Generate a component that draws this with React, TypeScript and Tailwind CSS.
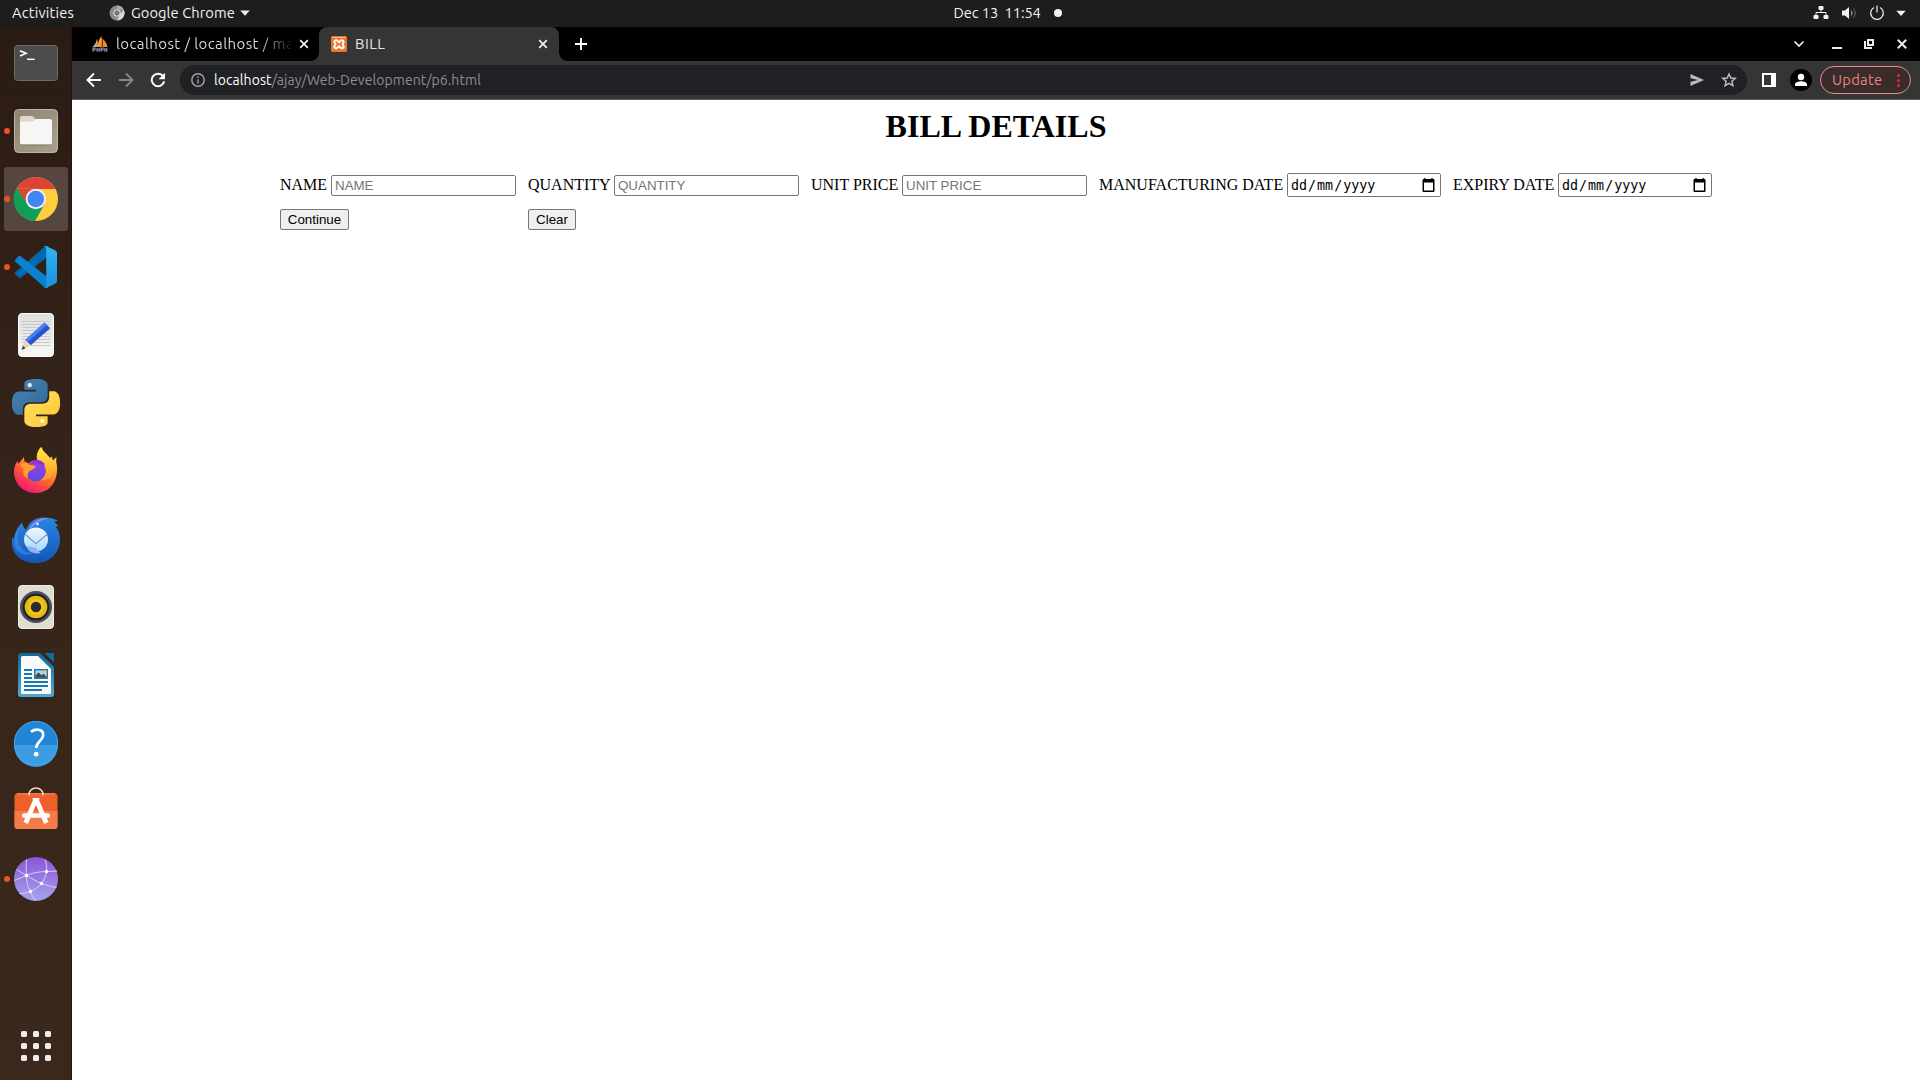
import React from "react";

const ui = "font-['Ubuntu','Noto_Sans',sans-serif]";

function Svg({ children, size = 48, box = 48, className = "" }: { children: React.ReactNode; size?: number; box?: number; className?: string }) {
  return (
    <svg width={size} height={size} viewBox={`0 0 ${box} ${box}`} fill="none" className={`block shrink-0 ${className}`}>
      {children}
    </svg>
  );
}

function Grad({ id, from, to, diag = false }: { id: string; from: string; to: string; diag?: boolean }) {
  return (
    <linearGradient id={id} x1="0" y1="0" x2={diag ? "1" : "0"} y2="1">
      <stop offset="0" stopColor={from} />
      <stop offset="1" stopColor={to} />
    </linearGradient>
  );
}

const Terminal = () => (
  <Svg>
    <rect x="2.5" y="6.5" width="43" height="35" rx="3" fill="#4c4c4c" stroke="#6b6b6b" />
    <path d="M8 11.8l6 2.5-6 2.6" stroke="#fff" strokeWidth="1.6" />
    <path d="M15 20.3h7.5" stroke="#fff" strokeWidth="1.5" />
  </Svg>
);

const Files = () => (
  <Svg>
    <Grad id="files" from="#8c846f" to="#a9a08d" diag />
    <rect x="2.5" y="2.5" width="43" height="43" rx="4" fill="url(#files)" stroke="#bdb6a6" />
    <path d="M8 11a2 2 0 0 1 2-2h10c1.500 0 2.500 3 4 3h8v6H8z" fill="#dcd7ca" />
    <path d="M8 14.500h12c2 0 3-2.500 5-2.500h13a2 2 0 0 1 2 2v21.500a2 2 0 0 1-2 2H10a2 2 0 0 1-2-2z" fill="#f8f7f5" />
    <path d="M9.500 38h29" stroke="#6e6756" strokeOpacity=".6" />
  </Svg>
);

const Chrome = () => (
  <Svg>
    <circle cx="24" cy="24" r="22" fill="#ffcd40" />
    <path d="M5 13A22 22 0 0 1 43.600 14H24z" fill="#db4437" />
    <path d="M5 13A22 22 0 0 0 23 46L32.700 29 24 24 15 29z" fill="#0f9d58" />
    <path d="M5 13l10 16 9-15z" fill="#db4437" />
    <path d="M5 13A22 22 0 0 0 4 34L15 29.200z" fill="#0f9d58" />
    <circle cx="23.800" cy="24" r="10.200" fill="#f1f1f1" />
    <circle cx="23.800" cy="24" r="8.300" fill="#4285f4" />
  </Svg>
);

const VSCode = () => (
  <Svg>
    <Grad id="vs" from="#30b4f4" to="#1b8fe0" />
    <path d="M3 31l3.600 3.700c.6.500 1.400.500 2 .1L36 13.500V3.100c-1.200-.4-2.600-.2-3.500.7L3.400 29.200c-.6.500-.8 1.300-.4 1.800z" fill="#0068ae" />
    <path d="M3 17l3.600-3.700c.6-.5 1.400-.5 2-.1L36 34.500v10.400c-1.200.4-2.600.2-3.500-.7L3.400 18.800c-.6-.5-.8-1.300-.4-1.800z" fill="#0a82cf" />
    <path d="M34 3l9 4.200c1.200.6 2 1.700 2 3v27.600c0 1.300-.8 2.400-2 3L34 45c-1 .3-2-.1-2.500-.8 1.400.6 2.700-.2 2.700-1.600V5.400c0-1.400-1.400-2.200-2.700-1.600C32 3.100 33 2.700 34 3z" fill="url(#vs)" />
  </Svg>
);

const Editor = () => (
  <Svg>
    <Grad id="ed" from="#dedede" to="#f7f7f7" />
    <rect x="6.500" y="2.500" width="35" height="43" rx="3.500" fill="url(#ed)" stroke="#f8f8f8" />
    <path d="M10 10.500h28M10 13.500h28M10 16.500h28M10 19.500h28M10 22.500h28M10 25.500h28M10 28.500h28M10 31.500h28M10 34.500h28" stroke="#c8c8c8" />
    <path d="M32.500 11.500l5.700 5.700-19.400 17-5.700-5z" fill="#2457cf" />
    <path d="M32.500 11.500l2.600 2.600L15.500 31l-2.600-2z" fill="#4d7df0" />
    <path d="M13 29l5.800 5.200-9 4.500z" fill="#f3d2b3" />
    <path d="M11 35l2.600 2-4 2z" fill="#333" />
  </Svg>
);

const pySnake =
  "M14.25.18l.9.2.73.26.59.3.45.32.34.34.25.34.16.33.1.3.04.26.02.2-.01.13V8.5l-.05.63-.13.55-.21.46-.26.38-.3.31-.33.25-.35.19-.35.14-.33.1-.3.07-.26.04-.21.02H8.77l-.69.05-.59.14-.5.22-.41.27-.33.32-.27.35-.2.36-.15.37-.1.35-.07.32-.04.27-.02.21v3.06H3.17l-.21-.03-.28-.07-.32-.12-.35-.18-.36-.26-.36-.36-.35-.46-.32-.59-.28-.73-.21-.88-.14-1.05-.05-1.23.06-1.22.16-1.04.24-.87.32-.71.36-.57.4-.44.42-.33.42-.24.4-.16.36-.1.32-.05.24-.01h.16l.06.01h8.16v-.83H6.18l-.01-2.75-.02-.37.05-.34.11-.31.17-.28.25-.26.31-.23.38-.2.44-.18.51-.15.58-.12.64-.1.71-.06.77-.04.84-.02 1.27.05z";

const Python = () => (
  <Svg box={24}>
    <Grad id="pyb" from="#4684b5" to="#306998" diag />
    <Grad id="pyy" from="#ffc331" to="#ffe563" diag />
    <path d={pySnake} fill="url(#pyb)" />
    <path d={pySnake} transform="rotate(180 12 12)" fill="url(#pyy)" />
    <circle cx="8.850" cy="3.050" r="1.100" fill="#e4f1fb" />
    <circle cx="15.150" cy="20.950" r="1.100" fill="#fff7d0" />
  </Svg>
);

const Firefox = () => (
  <Svg>
    <linearGradient id="ff1" x1=".85" y1="0" x2=".3" y2="1">
      <stop offset="0" stopColor="#fff44f" />
      <stop offset=".35" stopColor="#ffa62e" />
      <stop offset=".65" stopColor="#ff5b36" />
      <stop offset="1" stopColor="#f0137a" />
    </linearGradient>
    <Grad id="ff2" from="#a43bf0" to="#5b4be0" />
    <Grad id="ff3" from="#fff04a" to="#ff9a26" />
    <path d="M29 0c1 4 6 6.500 9 11l2-1.500.8 4L44.500 10l-.3 4.500C47.500 28 42 45.500 24 46 10 46 2 36 2 24.500c0-4.500 1.500-8 3.800-10.500L6 17l6-7 .4 4.500c1.500.4 3 1 4.600 2 2.500-3 6-3.500 8.500-3C23.500 8 26 3 29 0z" fill="url(#ff1)" />
    <circle cx="23.800" cy="24.200" r="10.200" fill="url(#ff2)" />
    <path d="M8.500 17c3-1 6-1 9 .8 3 .2 5.500.5 6.300 2.200-1.500 2.500-5 2.800-6.800 4.500-2 2.300-1.500 5-.8 7-4-1.500-5.900-5-4.700-9.500-1.500-1.500-2.600-3-3-5z" fill="#ff9d25" />
    <path d="M30 0c-4 3.500-6.500 9-4.500 13.500 4.500.8 8.500 3.500 8.500 9.500 0 5-3 8.500-6 10.500 9 .5 14-5 15-13 .2-3-.5-5-1.500-7l-1.500 1.500C38 9 30.500 7 30 0z" fill="url(#ff3)" fillOpacity=".85" />
    <path d="M25 13c3 0 5 1 6 3l1-1c0 2 .5 3 .5 5-3-4-8-5-14-2.500C19.500 15 22 13 25 13z" fill="#8f2bd8" />
  </Svg>
);

const Thunderbird = () => (
  <Svg>
    <Grad id="tb" from="#2a86e2" to="#1456b8" />
    <Grad id="tb2" from="#f2f9ff" to="#a8d6fb" />
    <path d="M10 7.500c1 4 2.500 6 4 7.500 3-8 9-12.500 18-12.500 5 0 9 1 14 3.200l-4 1 4.500 4.300-2.800.6C47 16 48 20 48 25c-.5 13-10 23-24 23C10 48 0 40 0 28v-6l2 2c.5-6 4-12 8-16.500z" fill="url(#tb)" />
    <path d="M16 17C19 8 27 2 37 3.500 29 5 26 6.500 23.500 9 20 13 17.500 13.500 16 17z" fill="#a989e8" />
    <path d="M10 8c-5 7-6.500 18-1 24 3 5 8 6.500 12 6-4 3-13 2-16.500-3C0 27 3 14 10 8z" fill="#43a9f5" fillOpacity=".4" />
    <circle cx="24" cy="24.500" r="12" fill="url(#tb2)" />
    <path d="M13.500 19.500l10.300 9.300L35 19.500" stroke="#6f9cc8" strokeWidth="1.200" />
    <path d="M14 31c2 5.500 7 8.500 15 7-2-1.200-4-3-4.500-5z" fill="#8fb0f5" />
    <circle cx="25.500" cy="9" r="1.400" fill="#d7e9ff" />
  </Svg>
);

const Rhythmbox = () => (
  <Svg>
    <rect x="6.500" y="2.500" width="35" height="43" rx="3.500" fill="#deddd2" stroke="#ecebe3" />
    <circle cx="24" cy="24" r="16" fill="#4a4c58" />
    <circle cx="24" cy="24" r="13.300" fill="#1d1e26" />
    <circle cx="24" cy="24" r="11.300" fill="#e8b90f" />
    <circle cx="24" cy="24" r="8" fill="#f1c71f" />
    <circle cx="24" cy="24" r="5.200" fill="#2b2c2e" />
  </Svg>
);

const Writer = () => (
  <Svg>
    <Grad id="wr" from="#0d6799" to="#4fa9d8" />
    <path d="M9 2h19l14 14v27a3 3 0 0 1-3 3H9a3 3 0 0 1-3-3V5a3 3 0 0 1 3-3z" fill="url(#wr)" />
    <path d="M32.500 2H42v9.500z" fill="#0e6c9d" />
    <path d="M10.500 5H26l13 13v23.500a1.500 1.500 0 0 1-1.500 1.500h-27A1.500 1.500 0 0 1 9 41.500v-35A1.500 1.500 0 0 1 10.500 5z" fill="#f7f9fa" />
    <path d="M12 19h8M12 23h8M12 27h8M12 31h24M12 35h24M12 39h18" stroke="#1b78ae" strokeWidth="2" />
    <rect x="22.700" y="18.700" width="12.600" height="8.600" fill="#a8d4ec" stroke="#1b78ae" strokeWidth="1.400" />
    <path d="M23.400 26.700v-2l3-3.500 3 3 2-1.500 3.200 3v1z" fill="#4a4a4a" />
    <path d="M31 19.400h3.600V23z" fill="#f5c023" />
  </Svg>
);

const Help = () => (
  <Svg>
    <circle cx="24" cy="24" r="22" fill="#2185d8" />
    <path d="M2 26h44a22 22 0 0 1-44 0z" fill="#3c9ce2" />
    <circle cx="24" cy="24" r="21.500" stroke="#49a7ea" />
    <path d="M19 12.800c2-1.500 4-2.100 6-2.100 4 0 6.200 2 6.200 5.300 0 6-7 6-7 13" stroke="#fff" strokeWidth="2.700" />
    <circle cx="24.200" cy="35.200" r="2.400" fill="#fff" />
  </Svg>
);

const Software = () => (
  <Svg>
    <rect x="2.500" y="6.500" width="43" height="35.500" rx="3" fill="#ee5f2a" />
    <path d="M2.500 24h43v15a3 3 0 0 1-3 3h-37a3 3 0 0 1-3-3z" fill="#f47c49" />
    <path d="M5 6.800h38" stroke="#ff9a6e" />
    <path d="M17 8.500V7.500a7 6.500 0 0 1 14 0v1" stroke="#f3dcae" strokeWidth="1.500" />
    <path d="M24 12L13.700 36M24 12l10.300 24" stroke="#fff" strokeWidth="4.700" />
    <rect x="10" y="26.200" width="28" height="4.600" rx="2.300" fill="#fff" />
    <path d="M20.500 11.800h7" stroke="#fff" strokeWidth="1.500" />
  </Svg>
);

const Globe = () => (
  <Svg>
    <Grad id="gl" from="#8a55d8" to="#a5a4ee" />
    <circle cx="24" cy="24" r="22" fill="url(#gl)" />
    <path d="M14.500 20.500C14 15 14 10 14.500 4.500M14.500 20.500L4.500 14.500M14.500 20.500L2.500 25.500M14.500 20.500c5-2.500 13-4 20-4l10.500-.5M14.500 20.500c5 3 10 6 15 8 5 2 10 3 15 4M34.500 16.500c.5-4 0-8-1.500-12M34.500 16.500c-1 5-2.500 9-5 12-3 4-7 6-11 8-4 1.500-7 2-11 2M14.500 20.500c0 6 1 11 4 16 1.500 4 3 6.500 5 9" stroke="#d9cdf6" />
    <g fill="#fff">
      <circle cx="14.500" cy="20.500" r="1.700" />
      <circle cx="34.500" cy="16.500" r="1.700" />
      <circle cx="29.500" cy="28.500" r="1.700" />
      <circle cx="18.500" cy="36.500" r="1.700" />
    </g>
  </Svg>
);

const dock = [
  { Icon: Terminal },
  { Icon: Files, dot: true },
  { Icon: Chrome, dot: true, active: true },
  { Icon: VSCode, dot: true },
  { Icon: Editor },
  { Icon: Python },
  { Icon: Firefox },
  { Icon: Thunderbird },
  { Icon: Rhythmbox },
  { Icon: Writer },
  { Icon: Help },
  { Icon: Software },
  { Icon: Globe, dot: true },
];

function Dock() {
  return (
    <aside className="flex w-[72px] shrink-0 flex-col items-center border-r border-[#21150e] bg-linear-to-b from-[#2b1c13] via-[#37251a] to-[#3a281d] pt-0.5 pb-4">
      {dock.map(({ Icon, dot, active }, i) => (
        <div key={i} className="flex h-[68px] w-[72px] items-center justify-center">
          <div className={`relative flex size-16 items-center justify-center rounded-[3px] ${active ? "bg-[#55473f]" : ""}`}>
            {dot && <span className="absolute top-[29px] left-0 size-1.5 rounded-full bg-[#e95420]" />}
            <Icon />
          </div>
        </div>
      ))}
      <div className="mt-auto mb-[3px] grid grid-cols-3 gap-1.5">
        {Array.from({ length: 9 }, (_, i) => (
          <span key={i} className="size-1.5 rounded-[1.5px] bg-[#efeeed]" />
        ))}
      </div>
    </aside>
  );
}

function TopBar() {
  return (
    <header className={`grid h-[27px] grid-cols-3 items-center bg-[#1d1d1d] pb-px text-[14.667px] leading-[22px] text-[#f2f2f2] ${ui}`}>
      <div className="flex items-center pl-3">
        <span className="w-[62px] tracking-[0.2px] whitespace-nowrap">Activities</span>
        <Svg size={16} box={16} className="ml-[35px]">
          <circle cx="8" cy="8" r="7.500" fill="#8a8a8a" />
          <path d="M8 .5a7.500 7.500 0 0 1 6.800 4.200H8z" fill="#a9a9a9" />
          <path d="M14.800 4.700A7.500 7.500 0 0 1 8 15.500l3-6z" fill="#d8d8d8" />
          <circle cx="8" cy="8" r="3.500" fill="#efefef" />
          <circle cx="8" cy="8" r="2.700" fill="#777" />
        </Svg>
        <span className="ml-1.5 w-[104px] tracking-[0.08px] whitespace-nowrap">Google Chrome</span>
        <Svg size={10} box={10} className="ml-[5px]">
          <path d="M.3 2.500h9.400L5 7.700z" fill="#f2f2f2" />
        </Svg>
      </div>
      <div className="flex items-center justify-center pl-[95px]">
        <span className="w-[87px] tracking-[-0.1px] whitespace-pre">Dec 13  11:54</span>
        <span className="ml-[13px] size-2 rounded-full bg-[#f2f2f2]" />
      </div>
      <div className="flex items-center justify-end pr-3.5">
        <Svg size={16} box={16}>
          <rect x="5.500" y="1" width="5" height="4" rx="1" fill="#f2f2f2" />
          <path d="M8 4v3.500M3 10.500v-3h10v3" stroke="#f2f2f2" />
          <rect x=".5" y="10" width="5" height="4" rx="1" fill="#f2f2f2" />
          <rect x="10.500" y="10" width="5" height="4" rx="1" fill="#f2f2f2" />
        </Svg>
        <Svg size={16} box={16} className="ml-3">
          <path d="M1 5.500h3L8 2v12l-4-3.500H1z" fill="#f2f2f2" />
          <path d="M10 5.500c1.300 1.500 1.300 3.500 0 5" stroke="#c0c0c0" />
          <path d="M12.300 3.500c2.500 2.700 2.500 6.300 0 9" stroke="#777" />
        </Svg>
        <Svg size={16} box={16} className="ml-3">
          <path d="M5 2.500a6.300 6.300 0 1 0 6 0M8 .5v7" stroke="#f2f2f2" strokeWidth="1.200" />
        </Svg>
        <Svg size={10} box={10} className="ml-[11px]">
          <path d="M.3 2.700h9.400L5 7.900z" fill="#f2f2f2" />
        </Svg>
      </div>
    </header>
  );
}

const Cross = ({ className = "" }: { className?: string }) => (
  <Svg size={10} box={10} className={className}>
    <path d="M1.200 1.200l7.600 7.600M8.800 1.200L1.200 8.800" stroke="#f1f1f1" strokeWidth="1.700" />
  </Svg>
);

function TabStrip() {
  return (
    <div className={`flex h-[34px] bg-black text-[15px] text-[#e3e3e3] ${ui}`}>
      <div className="flex w-[247px] items-center pl-5">
        <Svg size={16} box={16}>
          <path d="M.5 11C3 9 4.500 5.500 5 2.500l1 8.500z" fill="#b9bcc4" />
          <path d="M6 11C5.500 7 7 3 9.500.3c.7 4 .8 7 0 10.700z" fill="#f59a1b" />
          <path d="M10.300 11c.7-3 .5-6 0-8.500 2.700 2 4.700 5 5.200 8.500z" fill="#f08a2a" />
          <path d="M5.500 3.500V11H2.300C4 9 5 6.500 5.500 3.500z" fill="#e59a3c" />
          <path d="M1 15.700v-3.500h2v1.800H1M5 15.700V12M5 13.700h2M7.200 12v3.700M9 15.700v-3.500h2v1.800H9M12.800 12v3.700M12.800 13.700h1.800M14.800 12v3.700" stroke="#8a8aba" strokeWidth="1.200" />
        </Svg>
        <span className="ml-2 w-[175px] bg-linear-to-r from-[#e3e3e3] from-[80%] to-[#e3e3e3]/10 bg-clip-text tracking-[0.4px] whitespace-nowrap text-transparent">
          localhost / localhost / ma
        </span>
        <Cross className="ml-2" />
      </div>
      <div className="relative flex w-[240px] items-center rounded-t-lg bg-[#353535] pl-3">
        <span className="absolute bottom-0 -left-2 size-2 bg-[radial-gradient(circle_at_0_0,#000_7.500px,#353535_8px)]" />
        <span className="absolute -right-2 bottom-0 size-2 bg-[radial-gradient(circle_at_100%_0,#000_7.500px,#353535_8px)]" />
        <Svg size={16} box={16}>
          <rect width="16" height="16" rx="1.500" fill="#ee7330" />
          <path d="M1 1.500h14" stroke="#f7b58f" />
          <path
            d="M5 4.300h1L8 6.300l2-2h1A1.800 1.800 0 0 1 12.700 6L11.500 8.200l1.200 2.200A1.800 1.800 0 0 1 11 12.200h-1l-2-2-2 2H5a1.800 1.800 0 0 1-1.700-1.800L4.500 8.200 3.300 6A1.800 1.800 0 0 1 5 4.300z"
            stroke="#fff"
            strokeWidth="1.900"
            strokeLinejoin="round"
          />
        </Svg>
        <span className="ml-2 tracking-[0.4px]">BILL</span>
        <Cross className="mr-[11px] ml-auto" />
      </div>
      <div className="flex flex-1 items-center pl-[15px]">
        <Svg size={14} box={14}>
          <path d="M7 1v12M1 7h12" stroke="#fff" strokeWidth="1.900" />
        </Svg>
        <Svg size={12} box={12} className="mr-[27px] ml-auto">
          <path d="M1.500 3.500L6 8l4.500-4.500" stroke="#eee" strokeWidth="1.700" />
        </Svg>
        <Svg size={10} box={10} className="mr-[22px]">
          <path d="M0 9h10" stroke="#e8eaed" strokeWidth="2" />
        </Svg>
        <Svg size={10} box={10} className="mr-[23px]">
          <path d="M1 2v7h7" stroke="#e8eaed" strokeWidth="2" />
          <rect x="4" y="1" width="5" height="5" stroke="#e8eaed" strokeWidth="2" />
        </Svg>
        <Svg size={10} box={10} className="mr-[13px]">
          <path d="M.8.800l8.400 8.400M9.200.800L.8 9.200" stroke="#e8eaed" strokeWidth="2" />
        </Svg>
      </div>
    </div>
  );
}

function Toolbar() {
  return (
    <div className={`flex h-[39px] items-center border-b border-[#5a5a5a] bg-[#353535] text-[14px] ${ui}`}>
      <Svg size={16} box={16} className="ml-3.5">
        <path d="M15 8H2M8 1.500L1.500 8 8 14.500" stroke="#fff" strokeWidth="1.900" />
      </Svg>
      <Svg size={16} box={16} className="ml-4">
        <path d="M1 8h13M8 1.500L14.500 8 8 14.500" stroke="#868686" strokeWidth="1.900" />
      </Svg>
      <Svg size={16} box={16} className="ml-4">
        <path d="M13.200 4.300A6.300 6.300 0 1 0 14.200 9.300" stroke="#fff" strokeWidth="2" />
        <path d="M15 .8v6.400H8.600z" fill="#fff" />
      </Svg>
      <div className="ml-3.5 flex h-[30px] w-[1567px] items-center rounded-full bg-[#202124] pr-[9px] pl-[11px]">
        <Svg size={14} box={14}>
          <circle cx="7" cy="7" r="6.200" stroke="#a5a5a5" strokeWidth="1.400" />
          <path d="M7 6.200v4.200M7 3.500v1.500" stroke="#a5a5a5" strokeWidth="1.400" />
        </Svg>
        <span className="ml-[9px] tracking-[0.08px] whitespace-nowrap text-[#8e8e8e]">
          <span className="text-white">localhost</span>/ajay/Web-Development/p6.html
        </span>
        <Svg size={16} box={16} className="mr-[15px] ml-auto">
          <path d="M1.500 2L15 8 1.500 14V9.800L9 8 1.500 6.200z" fill="#bcbcbc" />
        </Svg>
        <Svg size={18} box={18}>
          <path d="M9 3l1.800 4 4.400.4-3.300 2.900 1 4.300L9 12.300l-3.900 2.300 1-4.300-3.300-2.900L7.200 7z" stroke="#bcbcbc" strokeWidth="1.500" />
        </Svg>
      </div>
      <Svg size={14} box={14} className="ml-[15px]">
        <path d="M0 0h14v14H0zM2 2v10h7V2z" fill="#fff" fillRule="evenodd" />
      </Svg>
      <Svg size={22} box={22} className="ml-3.5">
        <circle cx="11" cy="11" r="11" fill="#000" />
        <circle cx="11" cy="8" r="3.200" fill="#fff" />
        <path d="M5 17v-1.500c0-2.300 3.500-3.300 6-3.300s6 1 6 3.300V17z" fill="#fff" />
      </Svg>
      <div className="ml-2 flex h-7 w-[91px] items-center rounded-full border border-[#ee8a83] bg-[#3a2c2d] pl-[11px] text-[#ec837b]">
        <span className="w-[51px] text-[14.667px] tracking-[0.3px]">Update</span>
        <span className="ml-3.5 flex flex-col gap-0.5">
          <i className="size-[3px] rounded-full bg-[#dc2f2f]" />
          <i className="size-[3px] rounded-full bg-[#dc2f2f]" />
          <i className="size-[3px] rounded-full bg-[#dc2f2f]" />
        </span>
      </div>
    </div>
  );
}

function TextField({ label, width }: { label: string; width: string }) {
  return (
    <label className={`flex h-6 items-start justify-between ${width}`}>
      <span className="mt-[3px] leading-[18px] whitespace-nowrap">{label}</span>
      <input
        placeholder={label}
        className="mt-0.5 h-[21px] w-[185px] rounded-[2px] border border-[#767676] bg-white px-[3px] font-['Liberation_Sans',Arial,sans-serif] text-[13.333px] placeholder:text-[#757575]"
      />
    </label>
  );
}

function DateField({ label, width }: { label: string; width: string }) {
  return (
    <label className={`flex h-6 items-start justify-between ${width}`}>
      <span className="mt-[3px] leading-[18px] whitespace-nowrap">{label}</span>
      <span className="flex h-6 w-[154px] items-center rounded-[2px] border border-[#767676] bg-white pr-[5px] pl-[3px] font-['DejaVu_Sans_Mono',monospace] text-[13.333px] leading-5">
        <span className="mt-0.5">dd</span>
        <span className="mx-px mt-0.5">/</span>
        <span className="mt-0.5">mm</span>
        <span className="mx-px mt-0.5">/</span>
        <span className="mt-0.5">yyyy</span>
        <svg width="13" height="14" viewBox="0 0 13 14" className="mb-px ml-auto block">
          <path d="M1.500 1h10a1 1 0 0 1 1 1v11a1 1 0 0 1-1 1h-10a1 1 0 0 1-1-1V2a1 1 0 0 1 1-1zM2 4.500v8h9v-8z" fill="#000" fillRule="evenodd" />
          <path d="M3 0v2M10 0v2" stroke="#000" strokeWidth="1.300" />
        </svg>
      </span>
    </label>
  );
}

const button =
  "h-[21px] rounded-[2px] border border-[#767676] bg-[#efefef] font-['Liberation_Sans',Arial,sans-serif] text-[13.333px] leading-[19px] text-black";

function BillPage() {
  return (
    <main className="flex-1 bg-white pt-2 font-['Liberation_Serif','Times_New_Roman',serif] text-[16px] text-black">
      <h1 className="text-center text-[32px] leading-[37px] font-bold">BILL DETAILS</h1>
      <form className="mt-7 flex flex-col gap-3 pl-[208px]">
        <div className="flex gap-3">
          <TextField label="NAME" width="w-[236px]" />
          <TextField label="QUANTITY" width="w-[271px]" />
          <TextField label="UNIT PRICE" width="w-[276px]" />
          <DateField label="MANUFACTURING DATE" width="w-[342px]" />
          <DateField label="EXPIRY DATE" width="w-[259px]" />
        </div>
        <div className="flex gap-3">
          <div className="flex w-[236px]">
            <button type="button" className={`${button} w-[69px]`}>Continue</button>
          </div>
          <button type="reset" className={`${button} w-12`}>Clear</button>
        </div>
      </form>
    </main>
  );
}

export default function App() {
  return (
    <div className="flex h-[1080px] w-[1920px] flex-col overflow-hidden">
      <TopBar />
      <div className="flex min-h-0 flex-1">
        <Dock />
        <div className="flex flex-1 flex-col">
          <TabStrip />
          <Toolbar />
          <BillPage />
        </div>
      </div>
    </div>
  );
}
